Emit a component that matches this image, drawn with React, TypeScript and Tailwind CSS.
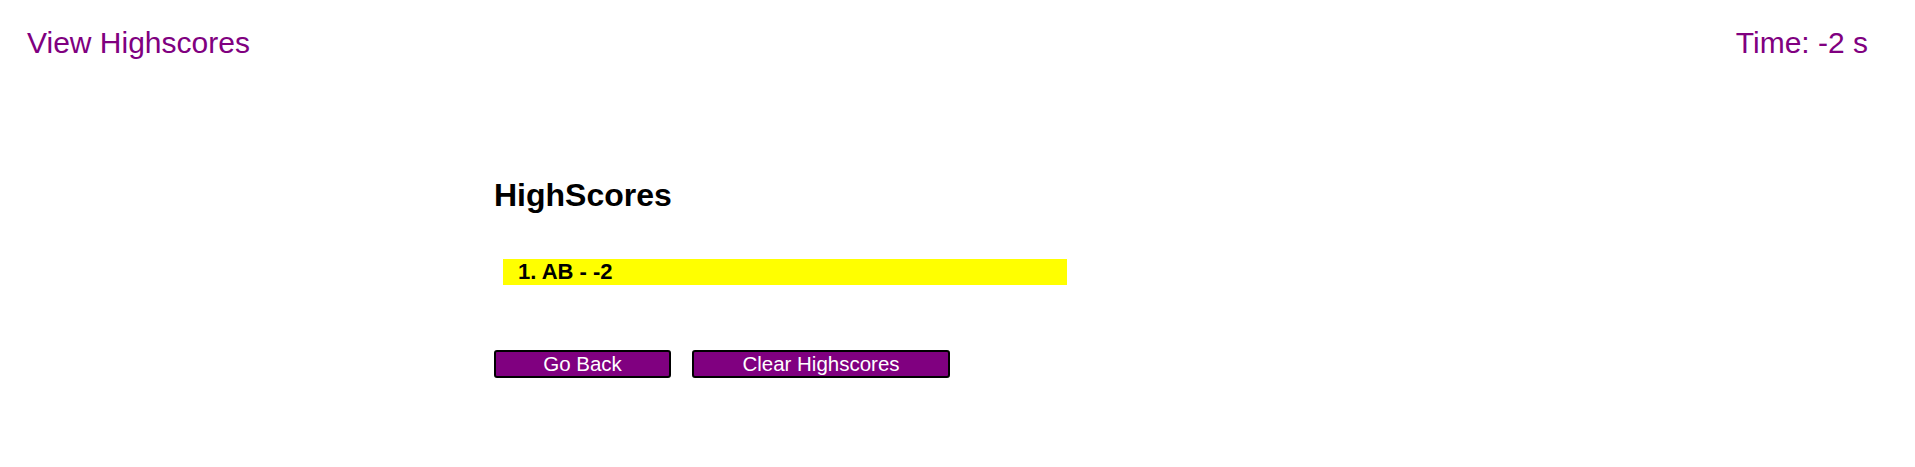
export default function App() {
  const scores = [{ initials: 'AB', score: -2 }]

  return (
    <div className="min-h-[467px] bg-white font-['Liberation_Sans',Arial,sans-serif]">
      <header className="flex items-start justify-between pl-[27px] pr-[47px] pt-[26px] text-[30px] leading-[34px] text-[#800080]">
        <span>View Highscores</span>
        <span>Time: -2 s</span>
      </header>

      <main className="pl-[494px] pt-[117px]">
        <h2 className="text-[32px] font-bold leading-[36px] text-black">HighScores</h2>

        <ol className="mt-[46px] ml-[9px] w-[564px]">
          {scores.map((s, i) => (
            <li
              key={i}
              className="h-[26px] bg-[#ffff00] pl-[15px] text-[22px] font-bold leading-[26px] text-black"
            >
              {i + 1}. {s.initials} - {s.score}
            </li>
          ))}
        </ol>

        <div className="mt-[65px] flex gap-[21px]">
          <button className="h-[28px] w-[177px] rounded-[3px] border-2 border-black bg-[#800080] text-[20.5px] leading-[22px] text-white">
            Go Back
          </button>
          <button className="h-[28px] w-[258px] rounded-[3px] border-2 border-black bg-[#800080] text-[20.5px] leading-[22px] text-white">
            Clear Highscores
          </button>
        </div>
      </main>
    </div>
  )
}
